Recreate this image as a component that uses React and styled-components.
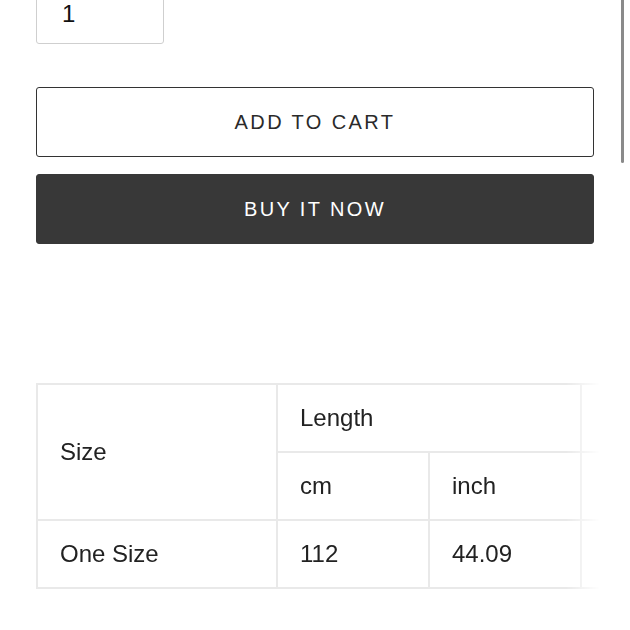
import React from 'react'
import styled, { createGlobalStyle } from 'styled-components'

const Global = createGlobalStyle`
  html, body {
    margin: 0;
    padding: 0;
    background: #fff;
    font-family: "Liberation Sans", Arial, sans-serif;
    overflow: hidden;
  }
`

export default function App() {
  return (
    <Page>
      <Global />
      <Scrollbar />
      <QtyBox>1</QtyBox>
      <Buttons>
        <Button>ADD TO CART</Button>
        <Button dark>BUY IT NOW</Button>
      </Buttons>
      <TableWrap>
        <Table>
          <colgroup>
            <col style={{ width: 240 }} />
            <col style={{ width: 152 }} />
            <col style={{ width: 152 }} />
            <col style={{ width: 152 }} />
          </colgroup>
          <tbody>
            <tr>
              <Cell rowSpan={2}>Size</Cell>
              <Cell colSpan={2}>Length</Cell>
              <Cell></Cell>
            </tr>
            <tr>
              <Cell>cm</Cell>
              <Cell>inch</Cell>
              <Cell></Cell>
            </tr>
            <tr>
              <Cell>One Size</Cell>
              <Cell>112</Cell>
              <Cell>44.09</Cell>
              <Cell></Cell>
            </tr>
          </tbody>
        </Table>
      </TableWrap>
    </Page>
  )
}

const Page = styled.div`
  position: relative;
  width: 630px;
  height: 630px;
  padding: 0 36px;
  box-sizing: border-box;
`

const Scrollbar = styled.div`
  position: absolute;
  top: -4px;
  right: 6px;
  width: 3px;
  height: 187px;
  border-radius: 2px;
  background: #8a8a8a;
`

const QtyBox = styled.div`
  margin-top: -20px;
  width: 128px;
  height: 64px;
  box-sizing: border-box;
  border: 1px solid #cfcfcf;
  border-radius: 3px;
  padding: 20px 0 0 25px;
  font-size: 24px;
  color: #111;
  line-height: 26px;
`

const Buttons = styled.div`
  display: flex;
  flex-direction: column;
  gap: 17px;
  margin-top: 43px;
  width: 558px;
`

const Button = styled.div`
  height: 70px;
  box-sizing: border-box;
  display: flex;
  align-items: center;
  justify-content: center;
  border-radius: 3px;
  border: 1.5px solid ${p => (p.dark ? '#383838' : '#333')};
  background: ${p => (p.dark ? '#383838' : '#fff')};
  color: ${p => (p.dark ? '#fff' : '#2a2a2a')};
  font-size: 20px;
  letter-spacing: 2.4px;
`

const TableWrap = styled.div`
  margin-top: 139px;
  width: 564px;
  overflow: hidden;
  -webkit-mask-image: linear-gradient(to right, #000 94%, transparent 100%);
  mask-image: linear-gradient(to right, #000 94%, transparent 100%);
`

const Table = styled.table`
  border-collapse: collapse;
  table-layout: fixed;
  width: 696px;
`

const Cell = styled.td`
  height: 66px;
  padding: 0 0 0 22px;
  border: 2px solid #e9e9e9;
  font-size: 24px;
  color: #222;
  vertical-align: middle;
`
